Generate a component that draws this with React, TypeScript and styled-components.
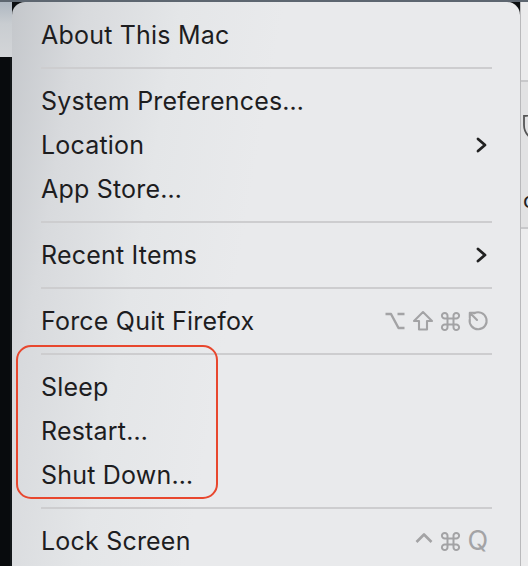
import React from "react";
import styled, { createGlobalStyle } from "styled-components";

const Global = createGlobalStyle`
  html, body { margin: 0; padding: 0; background: #0b0e10; }
  body { width: 528px; height: 566px; overflow: hidden; }
`;

const Desktop = styled.div`
  width: 528px;
  height: 566px;
  display: flex;
  flex-direction: column;
  background: #0b0e10;
  overflow: hidden;
`;

const TopStrip = styled.div`
  height: 2px;
  flex: none;
  background: #5d6670;
`;

const Body = styled.div`
  flex: 1;
  display: flex;
  min-height: 0;
`;

const LeftEdge = styled.div`
  width: 12px;
  flex: none;
  display: flex;
  flex-direction: column;
`;

const LeftTop = styled.div`
  height: 55px;
  background: linear-gradient(180deg, #aeb7c1 0%, #c9cdd1 40%, #d3d5d8 100%);
`;

const LeftBottom = styled.div`
  flex: 1;
  background: #080b0d;
  border-right: 2px solid #131719;
`;

const Menu = styled.div`
  width: 508px;
  flex: none;
  border-radius: 13px 13px 0 0;
  background: linear-gradient(
    100deg,
    #c4c7cb 0%,
    #d8dadd 12%,
    #e4e6e8 28%,
    #e9eaec 45%,
    #e9eaec 100%
  );
  padding: 11px 0 0;
  box-sizing: border-box;
  font-family: Inter, "Liberation Sans", sans-serif;
  color: #1d1d1f;
  position: relative;
`;

const Item = styled.div`
  height: 44px;
  display: flex;
  align-items: center;
  padding: 0 31px 0 29px;
  font-size: 25px;
  letter-spacing: 0.2px;
`;

const Label = styled.span`
  flex: 1;
`;

const Separator = styled.div`
  height: 22px;
  display: flex;
  align-items: center;
  padding: 0 28px 0 29px;
  &::after {
    content: "";
    flex: 1;
    height: 2px;
    background: #cdcdcf;
  }
`;

const Shortcut = styled.span`
  display: flex;
  align-items: center;
  gap: 6px;
  color: #a3a3a5;
`;

const KeyLetter = styled.span`
  font-family: Inter, "Liberation Sans", sans-serif;
  font-size: 27px;
  line-height: 22px;
  width: 22px;
  text-align: center;
  color: #a3a3a5;
`;

const Highlight = styled.div`
  position: absolute;
  left: 4px;
  top: 343px;
  width: 198px;
  height: 150px;
  border: 2px solid #e8472e;
  border-radius: 15px;
  pointer-events: none;
`;

const RightEdge = styled.div`
  flex: 1;
  display: flex;
  flex-direction: column;
  background: #e4e4e5;
  border-left: 1px solid #b9b9bb;
  box-shadow: inset 1px 0 2px rgba(0, 0, 0, 0.15);
  overflow: hidden;
`;

const RightBlock = styled.div<{ $h: number; $bg: string; $line?: boolean }>`
  height: ${(p) => p.$h}px;
  flex: none;
  background: ${(p) => p.$bg};
  border-bottom: ${(p) => (p.$line ? "2px solid #c8c8ca" : "none")};
  overflow: hidden;
  display: flex;
  flex-direction: column;
  padding-left: 2px;
`;

const EdgeLetter = styled.span`
  font-family: Inter, "Liberation Sans", sans-serif;
  font-size: 22px;
  color: #222;
  margin-top: 47px;
  line-height: 24px;
`;

const EdgeShield = styled.svg`
  margin-top: 29px;
  flex: none;
`;

const G = "#a3a3a5";

const Chevron = () => (
  <svg width="14" height="16" viewBox="0 0 14 16">
    <path d="M3 2 L10 8 L3 14" fill="none" stroke="#222" strokeWidth="2.8" strokeLinecap="round" strokeLinejoin="round" />
  </svg>
);

const OptionKey = () => (
  <svg width="22" height="20" viewBox="0 0 22 20">
    <path d="M1.5 3 H7 L14.5 17 H20.5 M13.5 3 H20.5" fill="none" stroke={G} strokeWidth="2.4" strokeLinejoin="round" />
  </svg>
);

const ShiftKey = () => (
  <svg width="22" height="22" viewBox="0 0 22 22">
    <path d="M11 2 L20 11 H15 V19.5 H7 V11 H2 Z" fill="none" stroke={G} strokeWidth="2.1" strokeLinejoin="round" />
  </svg>
);

const CommandKey = () => (
  <svg width="21" height="21" viewBox="0 0 21 21">
    <path
      d="M7.5 7.5 V5 A2.8 2.8 0 1 0 5 7.5 H16 A2.8 2.8 0 1 0 13.5 5 V16 A2.8 2.8 0 1 0 16 13.5 H5 A2.8 2.8 0 1 0 7.5 16 Z"
      fill="none"
      stroke={G}
      strokeWidth="2"
      strokeLinejoin="round"
    />
  </svg>
);

const EscKey = () => (
  <svg width="22" height="22" viewBox="0 0 22 22">
    <path d="M7 3.3 A8.5 8.5 0 1 1 2.8 9" fill="none" stroke={G} strokeWidth="2.1" strokeLinecap="round" />
    <path d="M2.8 2.8 L10 10 M2.8 2.8 V7.8 M2.8 2.8 H7.8" fill="none" stroke={G} strokeWidth="2.1" strokeLinecap="round" />
  </svg>
);

const ControlKey = () => (
  <svg width="20" height="20" viewBox="0 0 20 20">
    <path d="M2.5 11 L10 3.5 L17.5 11" fill="none" stroke={G} strokeWidth="2.6" strokeLinejoin="round" />
  </svg>
);

export default function App() {
  return (
    <>
      <Global />
      <Desktop>
        <TopStrip />
        <Body>
          <LeftEdge>
            <LeftTop />
            <LeftBottom />
          </LeftEdge>
          <Menu>
            <Item><Label>About This Mac</Label></Item>
            <Separator />
            <Item><Label>System Preferences…</Label></Item>
            <Item><Label>Location</Label><Chevron /></Item>
            <Item><Label>App Store…</Label></Item>
            <Separator />
            <Item><Label>Recent Items</Label><Chevron /></Item>
            <Separator />
            <Item>
              <Label>Force Quit Firefox</Label>
              <Shortcut>
                <OptionKey /><ShiftKey /><CommandKey /><EscKey />
              </Shortcut>
            </Item>
            <Separator />
            <Item><Label>Sleep</Label></Item>
            <Item><Label>Restart…</Label></Item>
            <Item><Label>Shut Down…</Label></Item>
            <Separator />
            <Item>
              <Label>Lock Screen</Label>
              <Shortcut>
                <ControlKey /><CommandKey /><KeyLetter>Q</KeyLetter>
              </Shortcut>
            </Item>
            <Highlight />
          </Menu>
          <RightEdge>
            <RightBlock $h={78} $bg="#ebebec" $line />
            <RightBlock $h={145} $bg="#e2e2e3" $line>
              <EdgeShield width="14" height="30" viewBox="0 0 14 30">
                <path d="M12 2 C8 4 4 5 1 5 V14 C1 21 5 26 12 29" fill="none" stroke="#555" strokeWidth="1.8" />
              </EdgeShield>
              <EdgeLetter>c</EdgeLetter>
            </RightBlock>
            <RightBlock $h={340} $bg="#ececed" />
          </RightEdge>
        </Body>
      </Desktop>
    </>
  );
}
